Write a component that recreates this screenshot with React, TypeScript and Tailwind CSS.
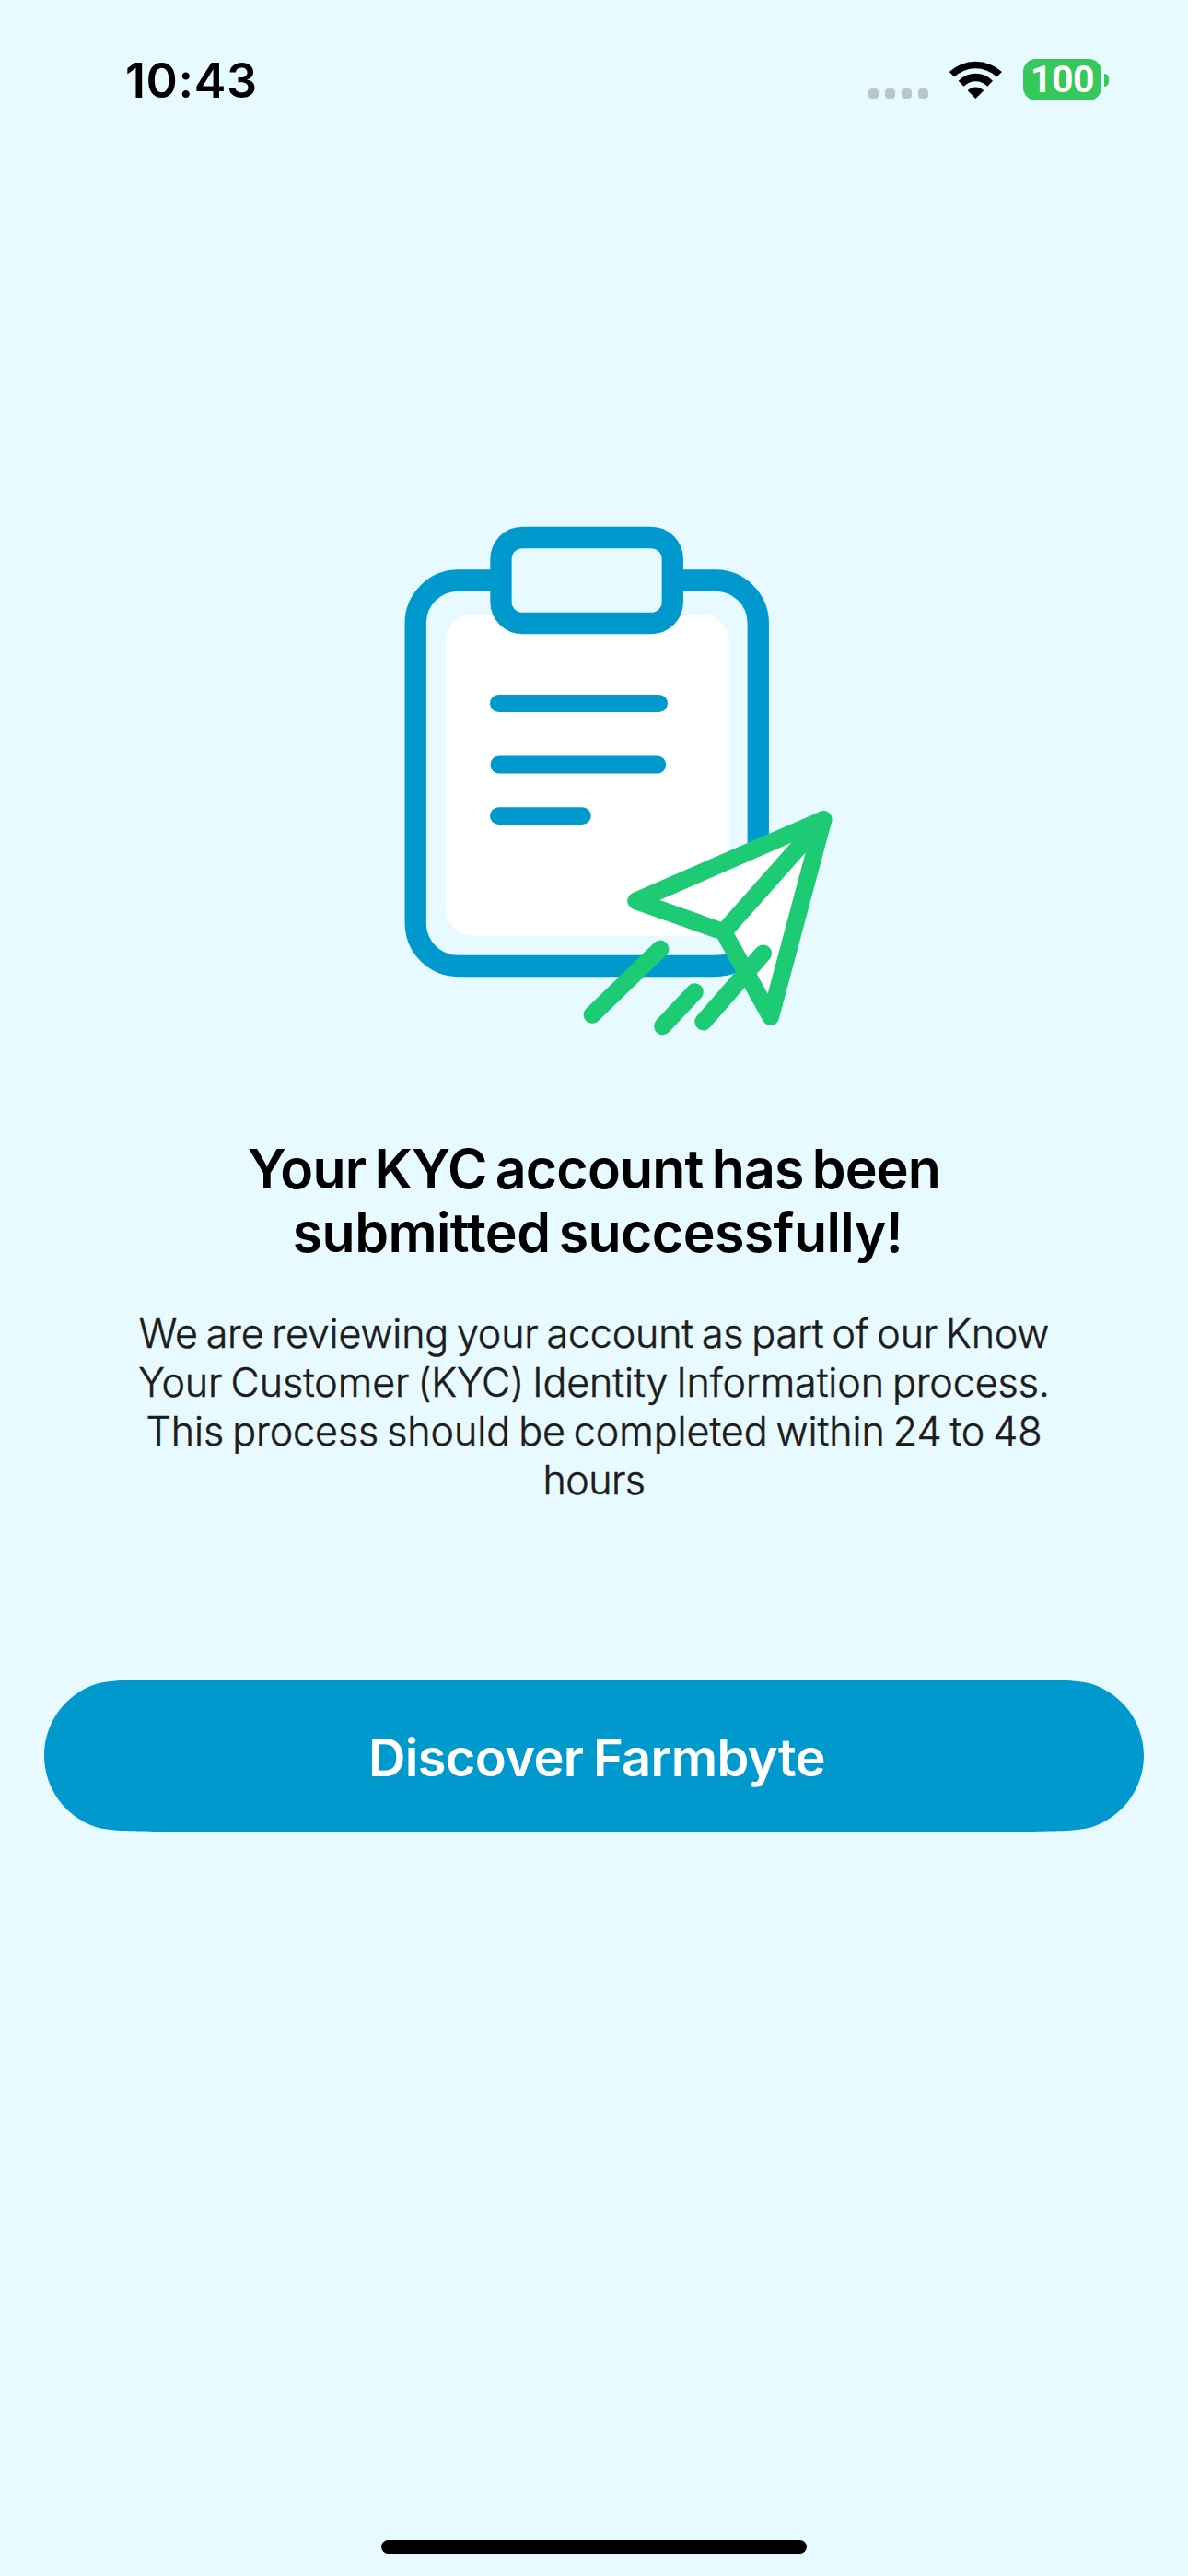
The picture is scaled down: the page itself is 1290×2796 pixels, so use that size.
import React from "react";

function StatusBar() {
  return (
    <header className="flex h-[176px] items-center justify-between pl-[136px] pr-[86px] text-black">
      <time className="whitespace-nowrap text-[52px] font-semibold leading-none tracking-[0.6px]">10:43</time>
      <div className="flex h-[48px] items-center">
        <div className="mt-[27px] flex gap-[7px]">
          <span className="size-[11px] rounded-[4px] bg-[#b9c7cd]" />
          <span className="size-[11px] rounded-[4px] bg-[#b9c7cd]" />
          <span className="size-[11px] rounded-[4px] bg-[#b9c7cd]" />
          <span className="size-[11px] rounded-[4px] bg-[#b9c7cd]" />
        </div>
        <svg className="-mt-[4px] ml-[22px] h-[44px] w-[59px]" viewBox="1030 64 59 44" aria-label="Wi-Fi">
          <path d="M1030.7 78A42 42 0 0 1 1088 78L1082.3 83.5A33.5 33.5 0 0 0 1036.3 83.5Z" />
          <path d="M1040.7 87.8A25.5 25.5 0 0 1 1078 87.8L1072.3 93.7A18 18 0 0 0 1046.5 93.7Z" />
          <path d="M1050.7 98.2A12 12 0 0 1 1068.2 98.2L1059.4 107Z" />
        </svg>
        <div className="-mt-[3px] ml-[22px] flex items-center gap-[3px]">
          <div className="flex h-[45px] w-[85px] items-center justify-center rounded-[14px] bg-[#35c85a] font-['Roboto',sans-serif] text-[41px] font-bold leading-none tracking-[-0.4px] text-white">
            <span>100</span>
          </div>
          <span className="h-[14px] w-[5px] rounded-r-full bg-[#35c85a]" />
        </div>
      </div>
    </header>
  );
}

function SubmittedIllustration() {
  return (
    <svg className="mx-auto block h-[568px] w-[490px]" viewBox="427 562 490 568" fill="none" aria-label="Form sent">
      <rect x="484.3" y="667" width="307.4" height="349" rx="29" fill="#fff" />
      <rect x="451.2" y="630" width="372.1" height="418.5" rx="46.5" stroke="#0099cd" strokeWidth="23.3" />
      <rect x="544" y="583.5" width="186.3" height="93" rx="23.3" fill="#e7faff" stroke="#0099cd" strokeWidth="23.3" />
      <path d="M541.4 763.5H715.6M541.9 830H713.8M541.4 885.7H632.3" stroke="#0099cd" strokeWidth="18.8" strokeLinecap="round" />
      <g stroke="#1dcb74" strokeWidth="18.8" strokeLinecap="round" strokeLinejoin="round">
        <path d="M894 889.5L690.6 977.8L785.7 1011.5L836.7 1103.5Z" fill="#fff" />
        <path d="M894 889.5L785.7 1011.5" />
        <path d="M717 1030L643 1101.4M754.4 1076.7L719.5 1113.8M828.6 1034.8L763.7 1109" />
      </g>
    </svg>
  );
}

export default function App() {
  return (
    <div className="flex h-[2796px] w-[1290px] flex-col overflow-hidden bg-[#e7faff] font-['Inter',sans-serif]">
      <StatusBar />
      <main className="flex flex-col pt-[386px]">
        <div className="pl-[54px]">
          <SubmittedIllustration />
        </div>
        <h1 className="mt-[104px] whitespace-nowrap text-center text-[59px] font-semibold leading-[69px] text-black">
          <span className="block tracking-[-0.81px] [word-spacing:-5px]">Your KYC account has been</span>
          <span className="block pl-[8px] tracking-[-0.58px] [word-spacing:-5px]">submitted successfully!</span>
        </h1>
        <p className="mt-[49px] whitespace-nowrap text-center text-[43px] font-light leading-[53px] text-[#1c1c1c] [-webkit-text-stroke:0.5px_#1c1c1c]">
          <span className="block tracking-[-0.17px] [word-spacing:-3px]">We are reviewing your account as part of our Know</span>
          <span className="block tracking-[-0.09px] [word-spacing:-3px]">Your Customer (KYC) Identity Information process.</span>
          <span className="block tracking-[-0.06px] [word-spacing:-3px]">This process should be completed within 24 to 48</span>
          <span className="block tracking-[-0.6px]">hours</span>
        </p>
        <button
          type="button"
          className="mx-[48px] mt-[190px] flex h-[165px] items-center justify-center whitespace-nowrap bg-[#0099cd] pl-[6px] pt-[4px] text-[56px] font-semibold tracking-[-0.65px] text-white [clip-path:path('M126_0C92_0.6_70_0.6_56_5C23_16_0_47_0_82.5C0_118_23_149_56_160C70_164.4_92_164.4_126_165H1068C1102_164.4_1124_164.4_1138_160C1171_149_1194_118_1194_82.5C1194_47_1171_16_1138_5C1124_0.6_1102_0.6_1068_0Z')] [word-spacing:-3px]"
        >
          Discover Farmbyte
        </button>
      </main>
      <div className="mx-auto mb-[24px] mt-auto h-[15px] w-[462px] rounded-full bg-black" />
    </div>
  );
}
